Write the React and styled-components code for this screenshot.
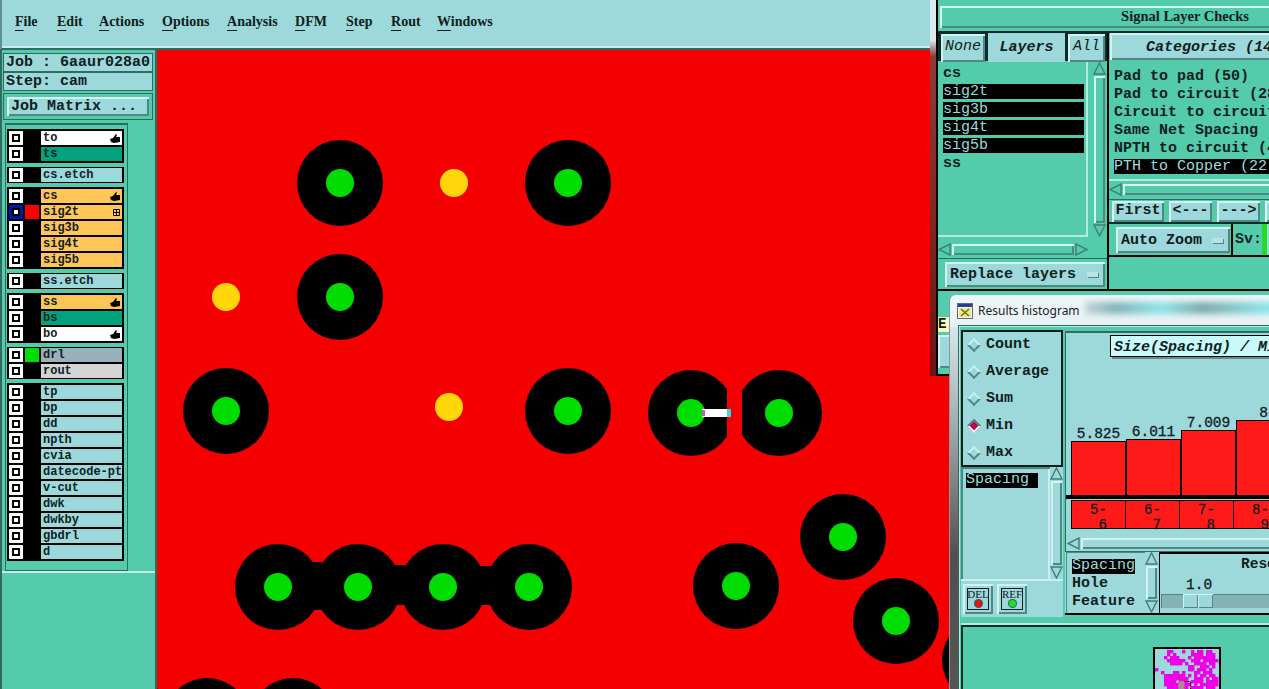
import React from "react"
import styled, { createGlobalStyle, css } from "styled-components"

const AQUA = "#9dd9da"
const GREEN = "#54cbab"
const DARK = "#2e6b62"
const MONO = `"Liberation Mono", monospace`
const SERIF = `"Liberation Serif", serif`

const raised = css`
  box-shadow: inset 2px 2px 0 #d2f3f1, inset -2px -2px 0 #4f8784;
`

const Global = createGlobalStyle`
  html, body { margin: 0; padding: 0; background: ${GREEN}; }
  #root { width: 1269px; height: 689px; overflow: hidden; }
  * { box-sizing: border-box; }
`

const Screen = styled.div`
  position: relative;
  width: 1269px;
  height: 689px;
  overflow: hidden;
  display: grid;
  grid-template-columns: 157px 1fr;
  grid-template-rows: 50px 1fr;
  font-family: ${MONO};
  font-weight: bold;
  color: #10201e;
`

const MenuBar = styled.div`
  grid-column: 1 / 3;
  display: flex;
  align-items: center;
  height: 50px;
  padding: 0 0 4px 13px;
  background: ${AQUA};
  border-left: 2px solid #5f8f90;
  border-bottom: 2px solid ${DARK};
  box-shadow: inset 0 -2px 0 #c6efee;
  font-family: ${SERIF};
  font-size: 14px;
`
const MenuItem = styled.span`
  width: ${(p) => p.$w}px;
  flex: none;
`
const Mnemonic = styled.span`
  text-decoration: underline;
  text-underline-offset: 4px;
  text-decoration-thickness: 1px;
`

const Side = styled.aside`
  background: ${GREEN};
  border-left: 2px solid ${DARK};
  border-right: 2px solid ${DARK};
  padding-top: 3px;
  display: flex;
  flex-direction: column;
`
const Info = styled.div`
  margin: 0 0 0 1px;
  width: 150px;
  height: 19px;
  padding-left: 2px;
  background: ${AQUA};
  border: 1px solid ${DARK};
  font-size: 15px;
  line-height: 17px;
  white-space: pre;
  overflow: hidden;
`
const MatrixFrame = styled.div`
  margin: 2px 0 0 1px;
  width: 150px;
  height: 27px;
  padding: 3px;
  background: ${GREEN};
  border: 1px solid ${DARK};
`
const MatrixBtn = styled.div`
  height: 100%;
  padding-left: 4px;
  background: ${AQUA};
  font-size: 15px;
  line-height: 19px;
  ${raised}
`
const ListRow = styled.div`
  margin-top: 3px;
  display: flex;
  flex: none;
  height: 448px;
  box-shadow: 0 1px 0 #b8efe0;
`
const LayerPanel = styled.div`
  width: 123px;
  margin-left: 3px;
  padding: 4px 3px 4px 1px;
  background: ${GREEN};
  border: 1px solid ${DARK};
  border-top-width: 2px;
  display: flex;
  flex-direction: column;
  gap: 4px;
`
const LayerGroup = styled.div`
  background: #000;
  padding: ${(p) => (p.$tight ? "1px 2px" : "2px")};
  display: flex;
  flex-direction: column;
  gap: 2px;
`
const Layer = styled.div`
  display: grid;
  grid-template-columns: 14px 14px 1fr;
  column-gap: 2px;
  height: 14px;
`
const Check = styled.span`
  width: 14px;
  height: 14px;
  border: 3px solid ${(p) => (p.$on ? "#0018a8" : "#fff")};
  background: #fff;
  box-shadow: inset 0 0 0 2px #000;
`
const Swatch = styled.span`
  background: ${(p) => p.$c || "#000"};
`
const LayerName = styled.span`
  display: flex;
  align-items: center;
  justify-content: space-between;
  padding: 0 2px;
  background: ${(p) => p.$bg || AQUA};
  color: #10201e;
  font-size: 12px;
  line-height: 14px;
  white-space: nowrap;
  overflow: hidden;
`
const SideGutter = styled.div`
  flex: 1;
  border-top: 2px solid #c3efe2;
`

const Board = styled.svg`
  display: block;
  width: 1112px;
  height: 639px;
`

const Floating = styled.section`
  position: absolute;
  left: ${(p) => p.$x}px;
  top: ${(p) => p.$y}px;
  width: ${(p) => p.$w}px;
  height: ${(p) => p.$h}px;
`

/* signal layer checks window */
const ChecksFrame = styled(Floating)`
  padding: 0 0 0 6px;
  background: linear-gradient(#dcebee 0, #dcebee 40px, #8f3a3a 56px, #6d1414 100%);
`
const ChecksInner = styled.div`
  height: 100%;
  background: ${GREEN};
  border-left: 2px solid #000;
  border-bottom: 2px solid #000;
  padding-top: 6px;
  display: flex;
  flex-direction: column;
`
const ChecksTitle = styled.div`
  height: 22px;
  margin-left: 2px;
  background: ${GREEN};
  font-family: ${SERIF};
  font-size: 14.5px;
  line-height: 21px;
  text-align: center;
  ${raised}
`
const ChecksBody = styled.div`
  margin-top: 3px;
  height: 260px;
  flex: none;
  border-top: 2px solid #0b2e2a;
  border-bottom: 2px solid #000;
  display: grid;
  grid-template-columns: 171px 1fr;
`
const LayersCol = styled.div`
  display: flex;
  flex-direction: column;
  border-right: 2px solid #000;
`
const HeadRow = styled.div`
  display: grid;
  grid-template-columns: 47px 1fr 37px;
  height: 28px;
  background: #0b2e2a;
  gap: 3px;
  padding-right: 2px;
`
const HeadBtn = styled.div`
  background: ${AQUA};
  font-size: 15px;
  font-weight: normal;
  font-style: italic;
  text-align: center;
  line-height: 26px;
  margin: ${(p) => (p.$side ? "1px 0 1px 3px" : "1px 0")};
  ${raised}
`
const HeadLabel = styled.div`
  background: ${AQUA};
  font-size: 15px;
  font-style: italic;
  text-align: center;
  line-height: 30px;
`
const ListArea = styled.div`
  display: flex;
  gap: 5px;
  height: 175px;
  margin-top: 1px;
  padding-right: 2px;
`
const LayerList = styled.div`
  flex: 0 0 150px;
  padding: 3px 0 0 5px;
  background: ${GREEN};
  box-shadow: inset -2px -2px 0 #b6ece0;
  font-size: 15px;
  line-height: 18px;
  display: flex;
  flex-direction: column;
`
const Pick = styled.div`
  height: 15px;
  line-height: 15px;
  margin: 1px 4px 2px 0;
  background: ${(p) => (p.$on ? "#000" : "transparent")};
  color: ${(p) => (p.$on ? AQUA : "inherit")};
  font-weight: ${(p) => (p.$on ? "normal" : "bold")};
  white-space: pre;
  overflow: hidden;
`
const ScrollBox = styled.div`
  display: flex;
  flex-direction: column;
  justify-content: space-between;
  align-items: stretch;
  flex: none;
  width: 13px;
  background: ${(p) => p.$bg || GREEN};
`
const ScrollThumb = styled.div`
  flex: 1;
  margin: 1px;
  background: ${(p) => p.$bg || GREEN};
  ${raised}
`
const HScroll = styled.div`
  display: flex;
  height: 13px;
  margin-top: ${(p) => p.$top}px;
  margin-left: ${(p) => p.$left || 0}px;
  width: ${(p) => (p.$w ? `${p.$w}px` : "auto")};
`
const ReplaceRow = styled.div`
  margin-top: 2px;
  flex: 1;
  padding: 3px 2px 2px 7px;
  border-top: 1px solid ${DARK};
`
const OptionBtn = styled.div`
  height: ${(p) => p.$h || 25}px;
  width: ${(p) => p.$w}px;
  background: ${AQUA};
  display: flex;
  align-items: center;
  justify-content: space-between;
  padding: 0 7px 0 5px;
  font-size: 15px;
  white-space: pre;
  ${raised}
`
const OptionMark = styled.span`
  width: 11px;
  height: 5px;
  background: #b9e4e4;
  box-shadow: 1px 1px 0 #4f8784;
`

const CatCol = styled.div`
  display: flex;
  flex-direction: column;
`
const CatHead = styled.div`
  height: 27px;
  margin: 0 0 0 1px;
  padding-left: 36px;
  background: ${AQUA};
  font-size: 15px;
  font-style: italic;
  line-height: 30px;
  white-space: pre;
  ${raised}
`
const CatList = styled.div`
  height: 119px;
  margin-top: 2px;
  padding: 6px 0 0 5px;
  background: ${GREEN};
  font-size: 15px;
  line-height: 18px;
  border-bottom: 2px solid #b6ece0;
`
const CatLine = styled.div`
  height: 18px;
  white-space: pre;
  background: ${(p) => (p.$on ? "linear-gradient(transparent 1px, #000 1px, #000 16px, transparent 16px)" : "none")};
  color: ${(p) => (p.$on ? AQUA : "inherit")};
  font-weight: ${(p) => (p.$on ? "normal" : "bold")};
`
const StepRow = styled.div`
  display: flex;
  gap: 5px;
  height: 25px;
  margin-top: 3px;
  padding: 1px 0 0 3px;
  border-top: 1px solid ${DARK};
  border-bottom: 2px solid #0b2e2a;
`
const StepBtn = styled.div`
  flex: 0 0 ${(p) => p.$w}px;
  height: 21px;
  background: ${AQUA};
  font-size: 15px;
  line-height: 20px;
  text-align: center;
  ${raised}
`
const ZoomRow = styled.div`
  display: flex;
  align-items: center;
  height: 33px;
  border-bottom: 2px solid #000;
`
const ZoomCell = styled.div`
  flex: 0 0 124px;
  height: 100%;
  display: flex;
  align-items: center;
  padding: 1px 0 0 7px;
  border-right: 2px solid #000;
`
const SvLabel = styled.span`
  flex: 0 0 29px;
  padding-left: 2px;
  font-size: 15px;
  line-height: 30px;
  white-space: pre;
`
const SvTrack = styled.div`
  flex: none;
  width: 200px;
  height: 100%;
  background: ${AQUA};
`
const SvBar = styled.div`
  width: 5px;
  height: 100%;
  background: #22dd22;
`
const BehindRow = styled.div`
  margin-top: 26px;
  width: 12px;
  height: 15px;
  background: #fdf8c0;
  font-size: 14px;
  line-height: 15px;
`
const BehindBtn = styled.div`
  margin-top: 3px;
  width: 20px;
  height: 33px;
  background: ${AQUA};
  ${raised}
`

/* results histogram window */
const HistFrame = styled(Floating)`
  padding: 30px 0 0 8px;
  border-radius: 6px 0 0 0;
  background: linear-gradient(#eef6f8 0, #e8f2f4 30px, #d5e6ea 34px, #a8b2b4 120px, #55504f 260px, #555 100%);
  border-left: 1px solid #8a9a9c;
`
const HistCaption = styled.div`
  position: absolute;
  left: 7px;
  top: 7px;
  display: flex;
  align-items: center;
  gap: 5px;
  font-family: "Noto Sans", sans-serif;
  font-weight: normal;
  font-size: 12px;
  color: #222;
`
const BlurBand = styled.div`
  position: absolute;
  left: 135px;
  top: 7px;
  width: 260px;
  height: 12px;
  filter: blur(3px);
  background: linear-gradient(90deg, #b7c7ca 0, #5e9ea4 12%, #6fe0e4 30%, #5b8f92 45%, #6be0e4 70%, #54999c 100%);
  opacity: 0.75;
`
const HistClient = styled.div`
  height: 100%;
  background: ${GREEN};
  border: 1px solid ${DARK};
  box-shadow: inset 1px 1px 0 #b6ece0;
  padding: 4px 0 0 2px;
  display: flex;
  flex-direction: column;
`
const HistTop = styled.div`
  display: grid;
  grid-template-columns: 102px 1fr;
  gap: 0 2px;
  height: 287px;
  flex: none;
`
const HistLeft = styled.div`
  display: flex;
  flex-direction: column;
  background: ${AQUA};
`
const RadioBox = styled.div`
  flex: none;
  height: 137px;
  padding-left: 3px;
  border: 2px solid #0a1f1c;
  display: flex;
  flex-direction: column;
`
const RadioRow = styled.div`
  flex: none;
  height: 27px;
  display: flex;
  align-items: center;
  gap: 7px;
  padding: 0 0 2px 3px;
  font-size: 15px;
`
const Diamond = styled.span`
  flex: none;
  width: 10px;
  height: 10px;
  transform: rotate(45deg);
  background: ${(p) => (p.$on ? "#c4004e" : AQUA)};
  border: 2px solid;
  border-color: ${(p) =>
    p.$on ? "#4f8784 #e9fbfb #e9fbfb #4f8784" : "#c9f0ef #4f8784 #4f8784 #c9f0ef"};
`
const SmallList = styled.div`
  display: flex;
  flex: none;
  height: 114px;
  background: ${AQUA};
  border-bottom: 2px solid #c6efee;
`
const SmallListBody = styled.div`
  flex: 1;
  padding: 6px 0 0 5px;
  font-size: 15px;
  box-shadow: inset 2px 2px 0 #4f8784, inset -2px 0 0 #c9f0ef;
`
const Chip = styled.span`
  display: block;
  width: ${(p) => p.$w}px;
  height: 15px;
  margin-bottom: 1px;
  line-height: 14px;
  background: #000;
  color: ${AQUA};
  font-weight: normal;
  white-space: pre;
  overflow: hidden;
`
const TagRow = styled.div`
  display: flex;
  gap: 4px;
  padding: 3px 0 0 2px;
`
const TagBtn = styled.div`
  width: 30px;
  height: 30px;
  padding: 4px;
  background: ${AQUA};
  ${raised}
`
const TagFace = styled.div`
  height: 100%;
  border: 1px solid #10201e;
  display: flex;
  flex-direction: column;
  align-items: center;
  font-family: ${SERIF};
  font-size: 11px;
  font-weight: normal;
  line-height: 11px;
`
const TagDot = styled.span`
  width: 7px;
  height: 7px;
  border-radius: 50%;
  background: ${(p) => p.$c};
  box-shadow: 0 0 0 1px #306060;
`
const HistRight = styled.div`
  display: flex;
  flex-direction: column;
  min-width: 0;
  padding-top: 1px;
`
const ChartPanel = styled.div`
  position: relative;
  height: 221px;
  flex: none;
  padding-left: 5px;
  background: ${AQUA};
  border: 1px solid ${DARK};
  border-top-width: 2px;
  display: flex;
  flex-direction: column;
`
const ChartTitle = styled.div`
  position: absolute;
  left: 44px;
  top: 2px;
  width: 320px;
  height: 22px;
  padding-left: 3px;
  background: #c9fbfb;
  border: 1px solid #000;
  box-shadow: 2px 2px 0 #5f9090;
  font-size: 15px;
  font-style: italic;
  line-height: 23px;
  white-space: pre;
`
const Bars = styled.div`
  display: flex;
  align-items: flex-end;
  height: 162px;
  flex: none;
`
const BarCol = styled.div`
  flex: 0 0 55px;
  display: flex;
  flex-direction: column;
  align-items: center;
`
const BarValue = styled.div`
  font-size: 14.5px;
  font-weight: normal;
  -webkit-text-stroke: 0.3px #10201e;
  line-height: 15px;
  margin-bottom: -1px;
`
const BarFill = styled.div`
  width: 100%;
  background: #ff1a1a;
  border: 1px solid #000;
  border-bottom: 0;
`
const Axis = styled.div`
  height: 4px;
  margin-left: -5px;
  width: 300px;
  flex: none;
  background: #000;
`
const LabelRow = styled.div`
  display: flex;
  margin-top: 1px;
  height: 29px;
  flex: none;
`
const LabelCell = styled.div`
  flex: 0 0 55px;
  padding: 2px 0 0 18px;
  background: #ff1a1a;
  border: 1px solid #000;
  margin-right: -1px;
  font-size: 14px;
  font-weight: normal;
  -webkit-text-stroke: 0.3px #10201e;
  line-height: 15px;
  white-space: pre;
`
const Controls = styled.div`
  display: flex;
  height: 63px;
  flex: none;
  border-bottom: 2px solid #000;
  background: ${AQUA};
  padding-left: 1px;
`
const KindList = styled.div`
  flex: 0 0 79px;
  padding: 7px 0 0 6px;
  font-size: 15px;
  line-height: 18px;
  box-shadow: inset 1px 1px 0 #4f8784;
`
const KindLine = styled.div`
  height: 18px;
`
const ResPanel = styled.div`
  flex: 1;
  margin-left: 1px;
  border-top: 2px solid #000;
  border-left: 1px solid #000;
  padding: 2px 0 0 26px;
  font-size: 14.5px;
  line-height: 17px;
`
const ResTitle = styled.div`
  padding-left: 55px;
  white-space: pre;
`
const ResValue = styled.div`
  margin-top: 4px;
  font-weight: normal;
  -webkit-text-stroke: 0.3px #10201e;
`
const Slider = styled.div`
  margin: 0 0 0 -25px;
  height: 14px;
  background: #83b3b3;
  box-shadow: inset 1px 1px 0 #4f8784;
  padding-left: 22px;
  display: flex;
`
const SliderPart = styled.div`
  width: 15px;
  height: 100%;
  background: ${AQUA};
  box-shadow: inset 1px 1px 0 #d2f3f1, inset -1px -1px 0 #4f8784;
`
const MapPanel = styled.div`
  margin-top: 8px;
  flex: 1;
  border-top: 2px solid #0b2e2a;
  border-left: 2px solid #0b2e2a;
  padding: 20px 0 0 190px;
  box-shadow: 0 -2px 0 #b6ece0;
`
const MapThumb = styled.svg`
  display: block;
  width: 68px;
  height: 60px;
  background: ${AQUA};
  border: 2px solid #000;
`

const menu = [
  ["File", 42], ["Edit", 42], ["Actions", 63], ["Options", 65], ["Analysis", 68],
  ["DFM", 51], ["Step", 45], ["Rout", 46], ["Windows", 70],
]

const AMBER = "#ffc557"
const TEAL = "#00a37c"
const groups = [
  { rows: [{ n: "to", bg: "#fff", hand: true }, { n: "ts", bg: TEAL }] },
  { tight: true, rows: [{ n: "cs.etch" }] },
  {
    rows: [
      { n: "cs", bg: AMBER, hand: true },
      { n: "sig2t", bg: AMBER, on: true, c: "#ff0000", grid: true },
      { n: "sig3b", bg: AMBER },
      { n: "sig4t", bg: AMBER },
      { n: "sig5b", bg: AMBER },
    ],
  },
  { tight: true, rows: [{ n: "ss.etch" }] },
  { rows: [{ n: "ss", bg: AMBER, hand: true }, { n: "bs", bg: TEAL }, { n: "bo", bg: "#fff", hand: true }] },
  { tight: true, rows: [{ n: "drl", bg: "#9ab0ba", c: "#00dd00" }, { n: "rout", bg: "#d4d4d4" }] },
  {
    rows: ["tp", "bp", "dd", "npth", "cvia", "datecode-ptc", "v-cut", "dwk", "dwkby", "gbdrl", "d"].map((n) => ({ n })),
  },
]

const pads = [
  [340, 183], [568, 183], [340, 297], [226, 411], [568, 411], [691, 413], [779, 413],
  [843, 537], [278, 587], [358, 587], [443, 587], [529, 587], [736, 586], [896, 621],
  [207, 721], [293, 721], [128, 720], [985, 660],
]
const necks = [[300, 562, 40, 48], [380, 565, 42, 40], [465, 566, 42, 39]]
const drills = [[454, 183], [226, 297], [449, 407]]

const bars = [
  { label: "5.825", value: 5.825, bin: "5-\n 6" },
  { label: "6.011", value: 6.011, bin: "6-\n 7" },
  { label: "7.009", value: 7.009, bin: "7-\n 8" },
  { label: "8", value: 8.09, bin: "8-\n 9" },
]

// dots of the job overview, one cell is 3px
const mapRows = [
  "....##...#..#.##.##..",
  "....#.#.....####.###.",
  "...#.###...#.#######.",
  "....######..###.#####",
  ".....####.#..####.##.",
  "...........##..###.#.",
  "#..........##.###.#..",
  "..#...##.#...##.###..",
  "...#######.#.#.##.##.",
  "...########..###.#.##",
  "...####.###.####.####",
  "...#########.#.######",
  "....#######.####.###.",
]

const Hand = () => (
  <svg width="10" height="10" viewBox="0 0 10 10">
    <path d="M0 6l3-1 3-4 1 1-1 2h4v5l-6 1-3-1z" fill="#000" />
  </svg>
)

const GridMark = () => (
  <svg width="7" height="7" viewBox="0 0 7 7">
    <path d="M.5.5h6v6h-6zM3.5.5v6M.5 3.5h6" fill="none" stroke="#000" />
  </svg>
)

const Arrow = ({ dir, bg = GREEN }) => {
  const shape = {
    up: "M1 12 L6.5 1 L12 12 Z",
    down: "M1 1 L12 1 L6.5 12 Z",
    left: "M12 1 L12 12 L1 6.5 Z",
    right: "M1 1 L1 12 L12 6.5 Z",
  }[dir]
  return (
    <svg width="13" height="13" viewBox="0 0 13 13" style={{ flex: "none" }}>
      <path d={shape} fill={bg} stroke="#3f7f78" strokeWidth="1.4" />
    </svg>
  )
}

const WindowIcon = () => (
  <svg width="16" height="16" viewBox="0 0 16 16">
    <rect x="0.5" y="0.5" width="15" height="15" fill="#f4f4ec" stroke="#667" />
    <rect x="1" y="1" width="14" height="3" fill="#24408c" />
    <rect x="2" y="5" width="12" height="9" fill="#f6e58a" />
    <path d="M4 6l8 7M12 6l-8 7" stroke="#5a7a20" strokeWidth="1.6" />
  </svg>
)

const App = () => (
  <>
    <Global />
    <Screen>
      <MenuBar>
        {menu.map(([name, w]) => (
          <MenuItem key={name} $w={w}>
            <Mnemonic>{name[0]}</Mnemonic>
            {name.slice(1)}
          </MenuItem>
        ))}
      </MenuBar>

      <Side>
        <Info>Job : 6aaur028a0</Info>
        <Info>Step: cam</Info>
        <MatrixFrame>
          <MatrixBtn>Job Matrix ...</MatrixBtn>
        </MatrixFrame>
        <ListRow>
          <LayerPanel>
            {groups.map((g, i) => (
              <LayerGroup key={i} $tight={g.tight}>
                {g.rows.map((r) => (
                  <Layer key={r.n}>
                    <Check $on={r.on} />
                    <Swatch $c={r.c} />
                    <LayerName $bg={r.bg}>
                      {r.n}
                      {r.hand && <Hand />}
                      {r.grid && <GridMark />}
                    </LayerName>
                  </Layer>
                ))}
              </LayerGroup>
            ))}
          </LayerPanel>
        </ListRow>
        <SideGutter />
      </Side>

      <Board viewBox="157 50 1112 639">
        <rect x="157" y="50" width="1112" height="639" fill="#f50000" />
        {necks.map(([x, y, w, h]) => (
          <rect key={x} x={x} y={y} width={w} height={h} fill="#000" />
        ))}
        {pads.map(([x, y]) => (
          <circle key={`${x}-${y}`} cx={x} cy={y} r="43" fill="#000" />
        ))}
        <rect x="727" y="370" width="15" height="90" fill="#f50000" />
        {pads.map(([x, y]) => (
          <circle key={`${x}-${y}`} cx={x} cy={y} r="14" fill="#00dc00" />
        ))}
        {drills.map(([x, y]) => (
          <circle key={`${x}-${y}`} cx={x} cy={y} r="14" fill="#ffd60a" />
        ))}
        <rect x="702" y="409" width="26" height="8" fill="#fff" />
        <rect x="702" y="410" width="3" height="6" fill="#d050d0" />
        <rect x="727" y="409" width="4" height="8" fill="#30d8e8" />
      </Board>

      <ChecksFrame $x={930} $y={0} $w={500} $h={376}>
        <ChecksInner>
          <ChecksTitle>Signal Layer Checks</ChecksTitle>
          <ChecksBody>
            <LayersCol>
              <HeadRow>
                <HeadBtn $side>None</HeadBtn>
                <HeadLabel>Layers</HeadLabel>
                <HeadBtn>All</HeadBtn>
              </HeadRow>
              <ListArea>
                <LayerList>
                  <Pick>cs</Pick>
                  <Pick $on>sig2t</Pick>
                  <Pick $on>sig3b</Pick>
                  <Pick $on>sig4t</Pick>
                  <Pick $on>sig5b</Pick>
                  <Pick>ss</Pick>
                </LayerList>
                <ScrollBox>
                  <Arrow dir="up" />
                  <ScrollThumb />
                  <Arrow dir="down" />
                </ScrollBox>
              </ListArea>
              <HScroll $top={6} $w={150}>
                <Arrow dir="left" />
                <ScrollThumb />
                <Arrow dir="right" />
              </HScroll>
              <ReplaceRow>
                <OptionBtn $w={160}>
                  Replace layers
                  <OptionMark />
                </OptionBtn>
              </ReplaceRow>
            </LayersCol>
            <CatCol>
              <CatHead>Categories (14)</CatHead>
              <CatList>
                <CatLine>Pad to pad (50)</CatLine>
                <CatLine>Pad to circuit (28)</CatLine>
                <CatLine>Circuit to circuit (6)</CatLine>
                <CatLine>Same Net Spacing (3)</CatLine>
                <CatLine>NPTH to circuit (4)</CatLine>
                <CatLine $on>PTH to Copper (22)</CatLine>
              </CatList>
              <HScroll $top={2}>
                <Arrow dir="left" />
                <ScrollThumb />
              </HScroll>
              <StepRow>
                <StepBtn $w={52}>First</StepBtn>
                <StepBtn $w={43}>{"<---"}</StepBtn>
                <StepBtn $w={43}>{"--->"}</StepBtn>
                <StepBtn $w={52}>Last</StepBtn>
              </StepRow>
              <ZoomRow>
                <ZoomCell>
                  <OptionBtn $w={114} $h={26}>
                    Auto Zoom
                    <OptionMark />
                  </OptionBtn>
                </ZoomCell>
                <SvLabel>Sv:</SvLabel>
                <SvTrack>
                  <SvBar />
                </SvTrack>
              </ZoomRow>
            </CatCol>
          </ChecksBody>
          <BehindRow>E</BehindRow>
          <BehindBtn />
        </ChecksInner>
      </ChecksFrame>

      <HistFrame $x={949} $y={295} $w={420} $h={420}>
        <BlurBand />
        <HistCaption>
          <WindowIcon />
          Results histogram
        </HistCaption>
        <HistClient>
          <HistTop>
            <HistLeft>
              <RadioBox>
                {["Count", "Average", "Sum", "Min", "Max"].map((n) => (
                  <RadioRow key={n}>
                    <Diamond $on={n === "Min"} />
                    {n}
                  </RadioRow>
                ))}
              </RadioBox>
              <SmallList>
                <SmallListBody>
                  <Chip $w={72}>Spacing</Chip>
                </SmallListBody>
                <ScrollBox $bg={AQUA}>
                  <Arrow dir="up" bg={AQUA} />
                  <ScrollThumb $bg={AQUA} />
                  <Arrow dir="down" bg={AQUA} />
                </ScrollBox>
              </SmallList>
              <TagRow>
                <TagBtn>
                  <TagFace>DEL<TagDot $c="#ee1111" /></TagFace>
                </TagBtn>
                <TagBtn>
                  <TagFace>REF<TagDot $c="#22dd22" /></TagFace>
                </TagBtn>
              </TagRow>
            </HistLeft>
            <HistRight>
              <ChartPanel>
                <ChartTitle>Size(Spacing) / Min</ChartTitle>
                <Bars>
                  {bars.map((b) => (
                    <BarCol key={b.bin}>
                      <BarValue>{b.label}</BarValue>
                      <BarFill style={{ height: Math.round(b.value * 9.27) }} />
                    </BarCol>
                  ))}
                </Bars>
                <Axis />
                <LabelRow>
                  {bars.map((b) => (
                    <LabelCell key={b.bin}>{b.bin}</LabelCell>
                  ))}
                </LabelRow>
                <HScroll $top={8} $left={-4}>
                  <Arrow dir="left" bg={AQUA} />
                  <ScrollThumb $bg={AQUA} />
                </HScroll>
              </ChartPanel>
              <Controls>
                <KindList>
                  <Chip $w={63}>Spacing</Chip>
                  <KindLine>Hole</KindLine>
                  <KindLine>Feature</KindLine>
                </KindList>
                <ScrollBox $bg={AQUA}>
                  <Arrow dir="up" bg={AQUA} />
                  <ScrollThumb $bg={AQUA} />
                  <Arrow dir="down" bg={AQUA} />
                </ScrollBox>
                <ResPanel>
                  <ResTitle>Resolution</ResTitle>
                  <ResValue>1.0</ResValue>
                  <Slider>
                    <SliderPart />
                    <SliderPart />
                  </Slider>
                </ResPanel>
              </Controls>
            </HistRight>
          </HistTop>
          <MapPanel>
            <MapThumb viewBox="0 0 64 56">
              {mapRows.map((row, y) =>
                [...row].map((c, x) =>
                  c === "#" ? <rect key={`${x}-${y}`} x={x * 3} y={y * 3 + 1} width="3.4" height="3.4" fill="#f000e8" /> : null
                )
              )}
              <path d="M29.5 32.5h-6v9h6" fill="#b08a90" stroke="#a08080" />
              <path d="M29.5 32.5h6v9h-6" fill="none" stroke="#000" strokeDasharray="2 1" />
            </MapThumb>
          </MapPanel>
        </HistClient>
      </HistFrame>
    </Screen>
  </>
)

export default App
